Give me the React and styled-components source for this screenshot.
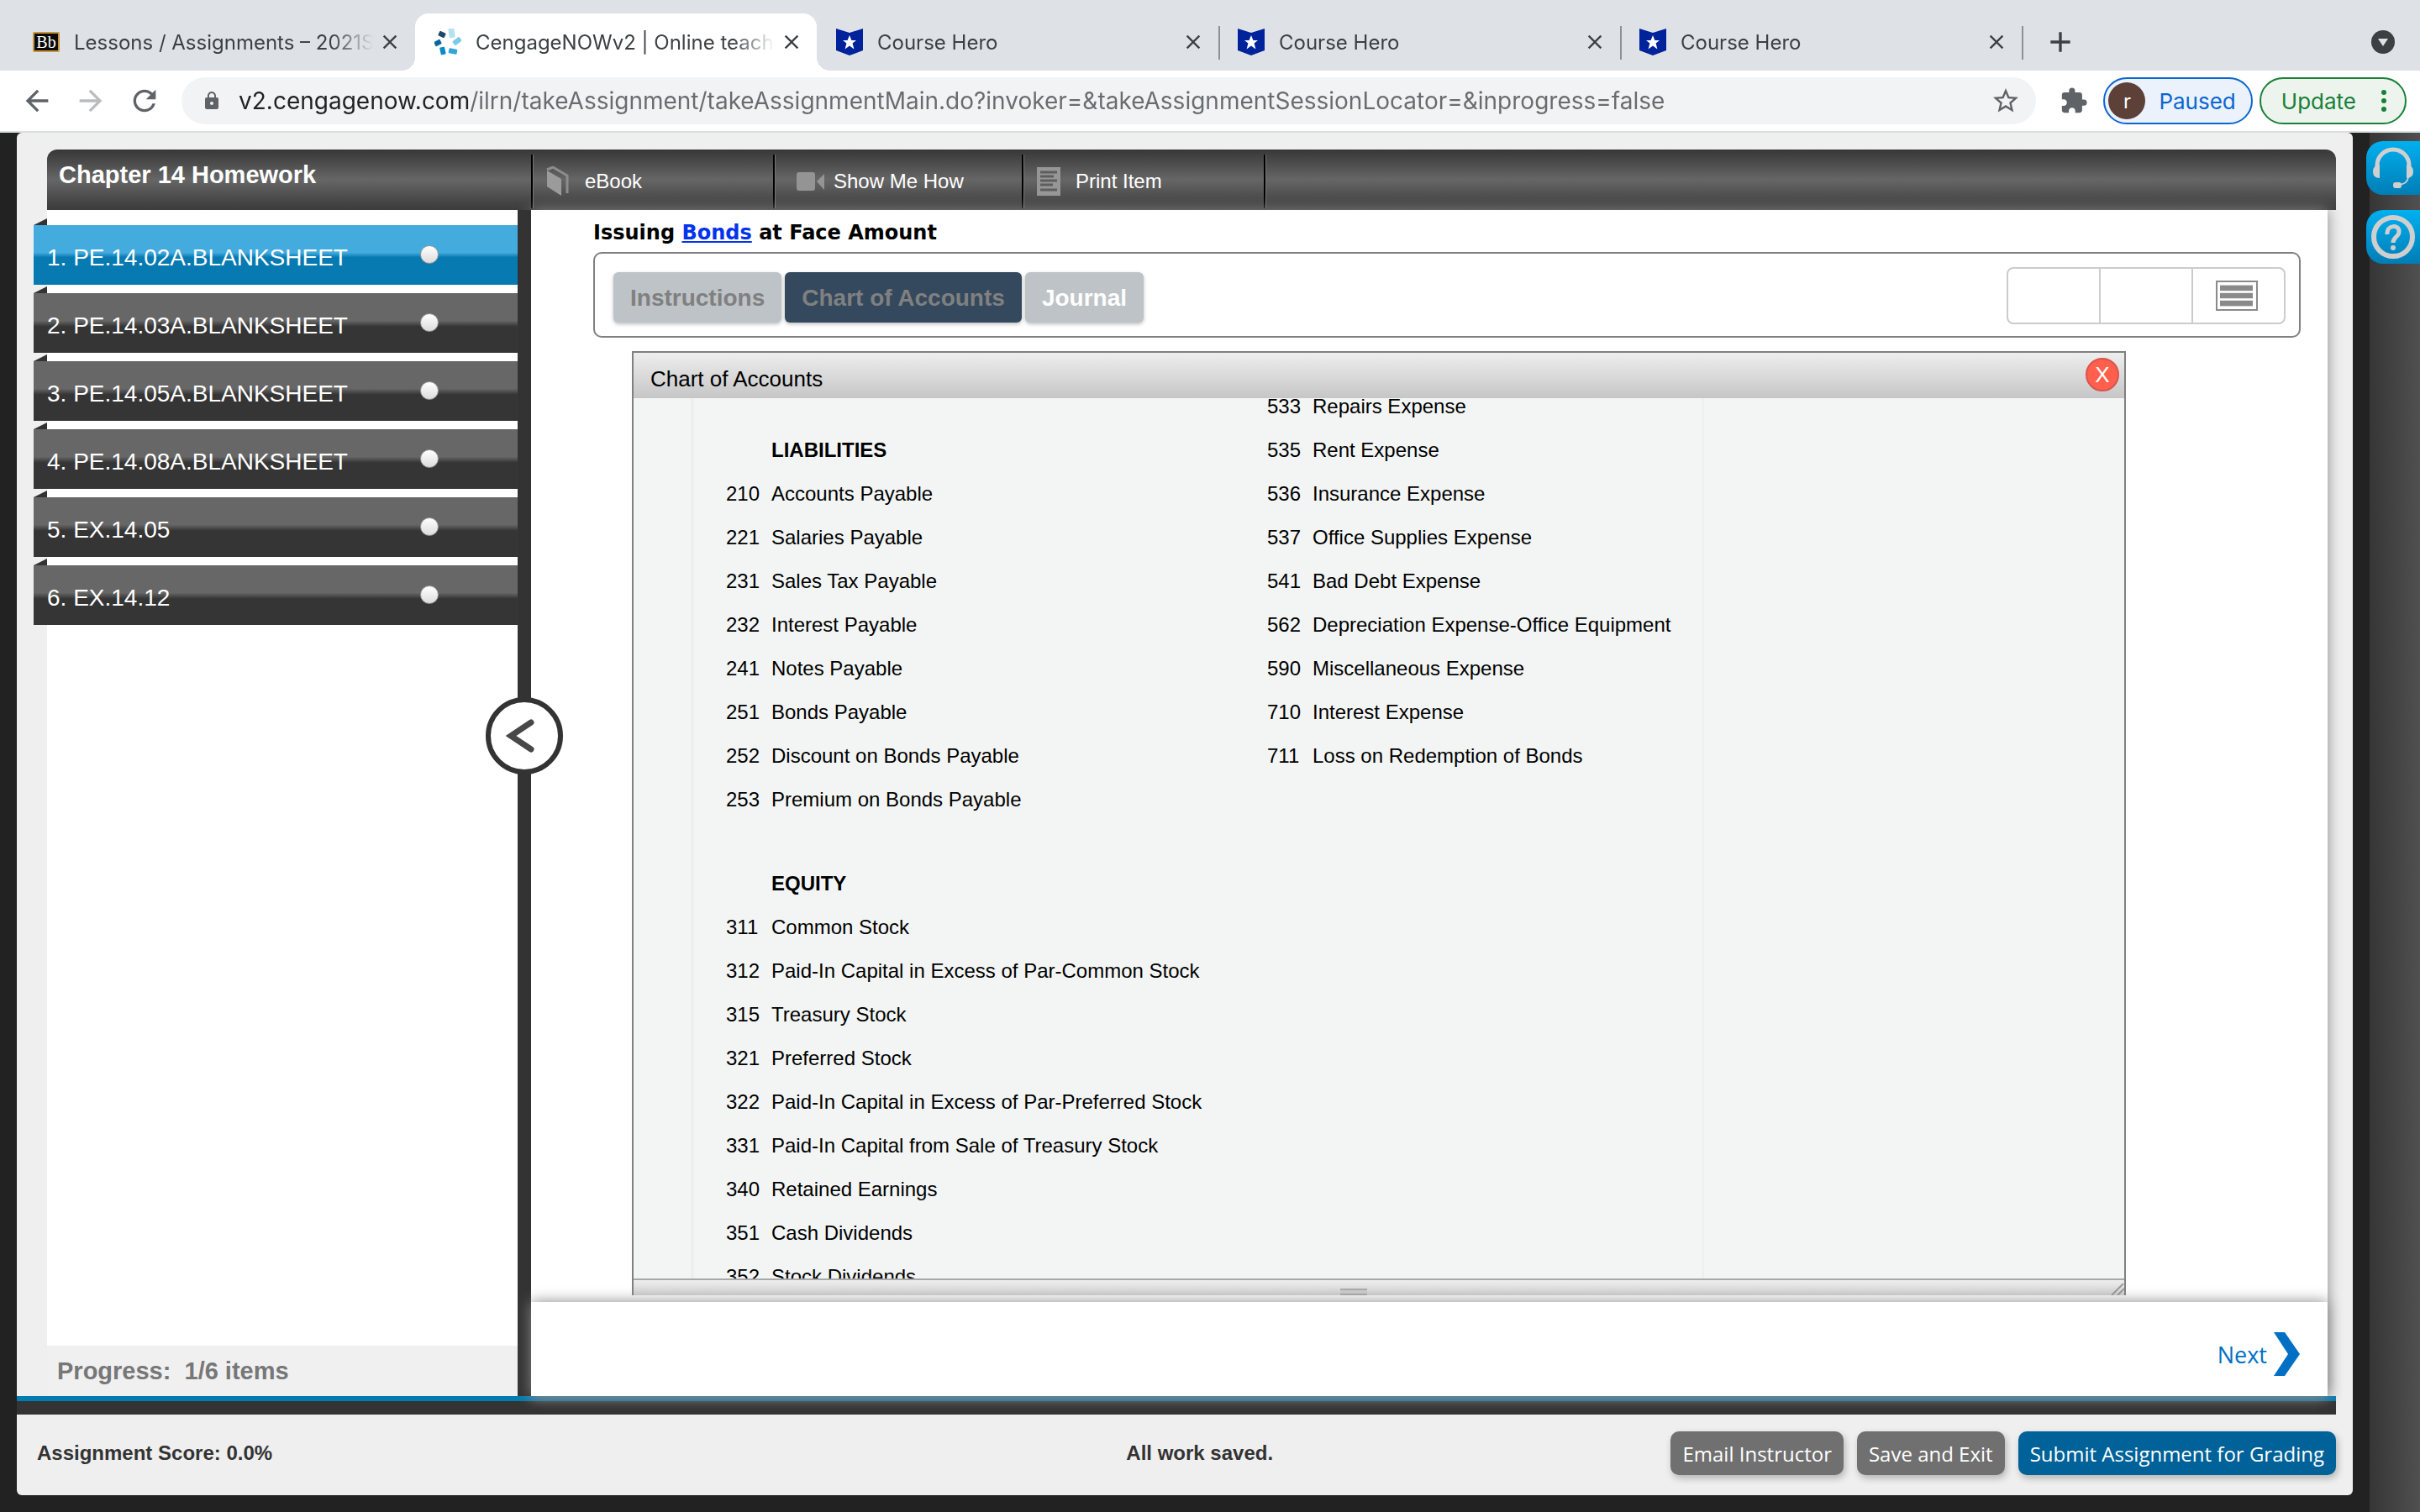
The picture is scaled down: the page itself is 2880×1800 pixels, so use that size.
import React, { useState } from "react";
import styled, { createGlobalStyle, css } from "styled-components";
import {
  MdAdd,
  MdArrowBack,
  MdArrowForward,
  MdClose,
  MdExtension,
  MdLock,
  MdRefresh,
  MdStarBorder,
} from "react-icons/md";

const BROWSER_TABS = [
  { title: "Lessons / Assignments – 2021S", icon: "blackboard" },
  { title: "CengageNOWv2 | Online teach", icon: "cengage", active: true },
  { title: "Course Hero", icon: "hero", divider: true },
  { title: "Course Hero", icon: "hero", divider: true },
  { title: "Course Hero", icon: "hero", divider: true },
];

const URL =
  "v2.cengagenow.com/ilrn/takeAssignment/takeAssignmentMain.do?invoker=&takeAssignmentSessionLocator=&inprogress=false";

const ITEMS = [
  "1. PE.14.02A.BLANKSHEET",
  "2. PE.14.03A.BLANKSHEET",
  "3. PE.14.05A.BLANKSHEET",
  "4. PE.14.08A.BLANKSHEET",
  "5. EX.14.05",
  "6. EX.14.12",
];

const LEFT_ACCOUNTS = [
  { type: "blank" },
  { type: "heading", name: "LIABILITIES" },
  { no: "210", name: "Accounts Payable" },
  { no: "221", name: "Salaries Payable" },
  { no: "231", name: "Sales Tax Payable" },
  { no: "232", name: "Interest Payable" },
  { no: "241", name: "Notes Payable" },
  { no: "251", name: "Bonds Payable" },
  { no: "252", name: "Discount on Bonds Payable" },
  { no: "253", name: "Premium on Bonds Payable" },
  { type: "gap" },
  { type: "heading", name: "EQUITY" },
  { no: "311", name: "Common Stock" },
  { no: "312", name: "Paid-In Capital in Excess of Par-Common Stock" },
  { no: "315", name: "Treasury Stock" },
  { no: "321", name: "Preferred Stock" },
  { no: "322", name: "Paid-In Capital in Excess of Par-Preferred Stock" },
  { no: "331", name: "Paid-In Capital from Sale of Treasury Stock" },
  { no: "340", name: "Retained Earnings" },
  { no: "351", name: "Cash Dividends" },
  { no: "352", name: "Stock Dividends" },
];

const RIGHT_ACCOUNTS = [
  { no: "533", name: "Repairs Expense" },
  { no: "535", name: "Rent Expense" },
  { no: "536", name: "Insurance Expense" },
  { no: "537", name: "Office Supplies Expense" },
  { no: "541", name: "Bad Debt Expense" },
  { no: "562", name: "Depreciation Expense-Office Equipment" },
  { no: "590", name: "Miscellaneous Expense" },
  { no: "710", name: "Interest Expense" },
  { no: "711", name: "Loss on Redemption of Bonds" },
];

const BlackboardIcon = () => (
  <BbLogo aria-hidden="true">Bb</BbLogo>
);

const CengageIcon = () => (
  <svg width="32" height="32" viewBox="0 0 32 32" aria-hidden="true">
    <rect x="17" y="0" width="7" height="11" rx="1" fill="#b5e1f0" transform="rotate(-8 20 5)" />
    <rect x="22" y="12" width="10" height="6" rx="1" fill="#7ac9e6" transform="rotate(-38 27 15)" />
    <rect x="17" y="24" width="10" height="6" rx="1" fill="#33a6d6" transform="rotate(10 22 27)" />
    <rect x="7" y="22" width="6" height="9" rx="1" fill="#0a8ac8" transform="rotate(-12 10 27)" />
    <rect x="0" y="14" width="8" height="6" rx="1" fill="#04689f" transform="rotate(-28 4 17)" />
    <rect x="5" y="4" width="8" height="6" rx="1" fill="#1c4869" transform="rotate(25 9 7)" />
  </svg>
);

const HeroIcon = () => (
  <svg width="32" height="32" viewBox="0 0 32 32" aria-hidden="true">
    <path d="M0 0L16 5L32 0V26L16 32L0 26Z" fill="#00229b" />
    <path
      d="M16 8L18.4 14H24L19.6 17.6L21.4 24.4L16 20.6L10.6 24.4L12.4 17.6L8 14H13.6Z"
      fill="#fff"
    />
  </svg>
);

const BookIcon = () => (
  <svg width="28" height="36" viewBox="0 0 28 36" aria-hidden="true">
    <path d="M1 5L18 15V35L1 24Z" fill="#9b9b9b" />
    <path d="M1 4L8 1L25 11V32" fill="none" stroke="#8d8d8d" strokeWidth="3" />
  </svg>
);

const VideoIcon = () => (
  <svg width="34" height="24" viewBox="0 0 34 24" aria-hidden="true">
    <rect x="0" y="1" width="22" height="22" rx="3" fill="#949494" />
    <path d="M24 12L33 3V22Z" fill="#949494" />
  </svg>
);

const PrintIcon = () => (
  <svg width="28" height="34" viewBox="0 0 28 34" aria-hidden="true">
    <rect width="28" height="34" fill="#969696" />
    <path
      d="M4 6H24M4 11H20M4 16H24M4 21H19M4 27H24"
      stroke="#5e5e5e"
      strokeWidth="3"
    />
  </svg>
);

const LinesIcon = () => (
  <svg width="50" height="36" viewBox="0 0 50 36" aria-hidden="true">
    <rect x="1" y="1" width="48" height="34" fill="#fff" stroke="#8a8a8a" strokeWidth="2" />
    <path d="M5 5H44V31H5Z" fill="#d2d2d2" />
    <path d="M5 9H44M5 18H44M5 27H44" stroke="#8a8a8a" strokeWidth="6" />
    <path d="M5 13.500H44M5 22.500H44" stroke="#fff" strokeWidth="2" />
  </svg>
);

const HeadsetIcon = () => (
  <svg width="50" height="50" viewBox="0 0 50 50" aria-hidden="true">
    <path d="M6 27V22a19 19 0 0 1 38 0V27" fill="none" stroke="#d0d0d0" strokeWidth="5" />
    <path
      d="M9 21V37Q1 37 1 29Q1 22 9 21ZM41 21V37Q49 37 49 29Q49 22 41 21Z"
      fill="#d0d0d0"
    />
    <path d="M43 36Q42 44 32 45" fill="none" stroke="#c4cdd2" strokeWidth="2" />
    <rect x="25" y="42" width="10" height="7" rx="3" fill="#d0d0d0" />
  </svg>
);

const HelpIcon = () => (
  <svg width="52" height="52" viewBox="0 0 52 52" aria-hidden="true">
    <circle cx="26" cy="26" r="23" fill="none" stroke="#cfcfcf" strokeWidth="6" />
    <path
      d="M19 23C18 11 34 11 33 20C33 26 26 26 26 33"
      fill="none"
      stroke="#cfcfcf"
      strokeWidth="5"
    />
    <circle cx="26" cy="39" r="3" fill="#cfcfcf" />
  </svg>
);

const TAB_ICONS = {
  blackboard: BlackboardIcon,
  cengage: CengageIcon,
  hero: HeroIcon,
};

const BrowserChrome = () => (
  <header>
    <TabStrip>
      {BROWSER_TABS.map((tab, index) => {
        const Icon = TAB_ICONS[tab.icon];
        return (
          <BrowserTab key={index} $active={tab.active} $divider={tab.divider}>
            <Icon />
            <TabTitle>{tab.title}</TabTitle>
            <TabClose aria-label="Close tab">
              <MdClose size={28} />
            </TabClose>
          </BrowserTab>
        );
      })}
      <NewTab aria-label="New tab">
        <MdAdd size={40} />
      </NewTab>
      <TabSearch aria-label="Search tabs">
        <svg width="28" height="28" viewBox="0 0 28 28">
          <circle cx="14" cy="14" r="14" fill="#3c4043" />
          <path d="M8 10H20L14 19Z" fill="#dee1e6" />
        </svg>
      </TabSearch>
    </TabStrip>
    <AddressRow>
      <NavButton aria-label="Back">
        <MdArrowBack size={40} />
      </NavButton>
      <NavButton aria-label="Forward" disabled>
        <MdArrowForward size={40} />
      </NavButton>
      <NavButton aria-label="Reload">
        <MdRefresh size={40} />
      </NavButton>
      <Omnibox>
        <MdLock size={24} />
        <UrlInput aria-label="Address" defaultValue={URL} />
        <MdStarBorder size={36} />
      </Omnibox>
      <ExtensionButton aria-label="Extensions">
        <MdExtension size={34} />
      </ExtensionButton>
      <PausedButton>
        <Avatar>r</Avatar>
        Paused
      </PausedButton>
      <UpdateButton>
        Update
        <svg width="10" height="48" viewBox="0 0 10 48" aria-hidden="true">
          <circle cx="5" cy="14" r="3" fill="#188038" />
          <circle cx="5" cy="24" r="3" fill="#188038" />
          <circle cx="5" cy="34" r="3" fill="#188038" />
        </svg>
      </UpdateButton>
    </AddressRow>
  </header>
);

const AccountTable = ({ rows }) => (
  <Accounts>
    <tbody>
      {rows.map((row, index) => (
        <AccountRow key={index} $gap={row.type === "gap"}>
          <AccountNo>{row.no}</AccountNo>
          <AccountName as={row.type === "heading" ? "th" : "td"}>
            {row.name}
          </AccountName>
        </AccountRow>
      ))}
    </tbody>
  </Accounts>
);

const App = () => {
  const [current, setCurrent] = useState(0);

  return (
    <Screen>
      <GlobalStyle />
      <BrowserChrome />
      <Page>
        <Panel>
          <TitleBar>
            <Chapter>Chapter 14 Homework</Chapter>
            <MenuButton>
              <BookIcon /> eBook
            </MenuButton>
            <MenuButton $wide>
              <VideoIcon /> Show Me How
            </MenuButton>
            <MenuButton>
              <PrintIcon /> Print Item
            </MenuButton>
            <MenuEnd />
          </TitleBar>

          <Columns>
            <Sidebar>
              <ItemList>
                {ITEMS.map((item, index) => (
                  <li key={item}>
                    <ItemButton
                      $active={index === current}
                      onClick={() => setCurrent(index)}
                    >
                      {item}
                      <Dot />
                    </ItemButton>
                  </li>
                ))}
              </ItemList>
              <Progress>Progress:&nbsp; 1/6 items</Progress>
            </Sidebar>

            <Splitter>
              <CollapseButton aria-label="Collapse item list">
                <svg width="36" height="44" viewBox="0 0 36 44" aria-hidden="true">
                  <path
                    d="M30 6L6 22L30 38"
                    fill="none"
                    stroke="#484848"
                    strokeWidth="7"
                    strokeLinecap="round"
                  />
                </svg>
              </CollapseButton>
            </Splitter>

            <Main>
              <Content>
                <ItemTitle>
                  Issuing <a href="#bonds">Bonds</a> at Face Amount
                </ItemTitle>
                <TabBar>
                  <PanelTab>Instructions</PanelTab>
                  <PanelTab $selected>Chart of Accounts</PanelTab>
                  <PanelTab $fresh>Journal</PanelTab>
                  <ButtonGroup>
                    <GroupButton aria-label="Split left" />
                    <GroupButton aria-label="Split right" />
                    <GroupButton aria-label="Single column">
                      <LinesIcon />
                    </GroupButton>
                  </ButtonGroup>
                </TabBar>
                <Window>
                  <WindowTitle>
                    Chart of Accounts
                    <WindowClose>X</WindowClose>
                  </WindowTitle>
                  <WindowBody>
                    <Ledger>
                      <AccountTable rows={LEFT_ACCOUNTS} />
                      <AccountTable rows={RIGHT_ACCOUNTS} />
                    </Ledger>
                  </WindowBody>
                  <WindowFoot>
                    <Grip />
                    <svg width="60" height="14" viewBox="0 0 60 14" aria-hidden="true">
                      <path d="M45 14L59 0M52 14L60 6" stroke="#999" strokeWidth="2" />
                    </svg>
                  </WindowFoot>
                </Window>
              </Content>
              <NextBar>
                <NextLink href="#next">
                  Next
                  <svg width="32" height="52" viewBox="0 0 32 52" aria-hidden="true">
                    <path d="M0 0H13L31 26L13 52H0L17 26Z" fill="#0070c4" />
                  </svg>
                </NextLink>
              </NextBar>
            </Main>
          </Columns>
          <BlueRule />

          <Footer>
            <span>Assignment Score: 0.0%</span>
            <span>All work saved.</span>
            <Actions>
              <ActionButton>Email Instructor</ActionButton>
              <ActionButton>Save and Exit</ActionButton>
              <ActionButton $primary>Submit Assignment for Grading</ActionButton>
            </Actions>
          </Footer>
        </Panel>
        <Rail>
          <RailButton aria-label="Support">
            <HeadsetIcon />
          </RailButton>
          <RailButton aria-label="Help">
            <HelpIcon />
          </RailButton>
        </Rail>
      </Page>
    </Screen>
  );
};

const GlobalStyle = createGlobalStyle`
  * {
    box-sizing: border-box;
  }

  body {
    margin: 0;
    font-family: "Liberation Sans", Arial, sans-serif;
    font-size: 24px;
  }

  button {
    margin: 0;
    padding: 0;
    border: none;
    background: none;
    font: inherit;
    color: inherit;
    cursor: pointer;
  }

  svg {
    flex: none;
    display: block;
  }
`;

const Screen = styled.div`
  display: flex;
  flex-direction: column;
  height: 100vh;
  overflow: hidden;
`;

/* browser chrome */

const TabStrip = styled.div`
  display: flex;
  align-items: center;
  height: 84px;
  padding: 16px 30px 0 16px;
  background: #dee1e6;
  color: #3c4043;
  font-family: Inter, sans-serif;
`;

const activeTab = css`
  background: #fff;

  /* flared bottom corners */
  &::before,
  &::after {
    content: "";
    position: absolute;
    bottom: 0;
    width: 16px;
    height: 16px;
  }

  &::before {
    right: 100%;
    background: radial-gradient(circle at 0 0, transparent 16px, #fff 16px);
  }

  &::after {
    left: 100%;
    background: radial-gradient(circle at 100% 0, transparent 16px, #fff 16px);
  }
`;

const tabDivider = css`
  &::after {
    content: "";
    position: absolute;
    right: -2px;
    top: 15px;
    width: 2px;
    height: 40px;
    background: #8d9196;
  }
`;

const BrowserTab = styled.div`
  position: relative;
  flex: 0 1 478px;
  min-width: 0;
  height: 68px;
  display: flex;
  align-items: center;
  padding: 0 16px 0 23px;
  border-radius: 16px 16px 0 0;
  ${(props) => props.$active && activeTab}
  ${(props) => props.$divider && tabDivider}
`;

const BbLogo = styled.span`
  flex: none;
  display: flex;
  align-items: center;
  justify-content: center;
  width: 32px;
  height: 24px;
  border: 2px solid #c8963c;
  border-radius: 2px;
  background: #0a0a0a;
  color: #fff;
  font: 20px "Liberation Serif", serif;
`;

const TabTitle = styled.span`
  flex: 1;
  min-width: 0;
  margin-left: 17px;
  margin-right: 6px;
  overflow: hidden;
  white-space: nowrap;
  mask-image: linear-gradient(to right, #000 86%, transparent);
`;

const TabClose = styled.button`
  width: 28px;
`;

const NewTab = styled.button`
  margin-left: 26px;
`;

const TabSearch = styled.button`
  margin-left: auto;
`;

const AddressRow = styled.div`
  display: flex;
  align-items: center;
  height: 74px;
  padding: 0 16px 0 24px;
  border-bottom: 2px solid #dadfe4;
  background: #fff;
  font-family: Inter, sans-serif;
  font-size: 28px;
`;

const NavButton = styled.button`
  margin-right: 24px;
  color: ${(props) => (props.disabled ? "#babcbe" : "#5f6368")};
`;

const Omnibox = styled.div`
  flex: 1;
  display: flex;
  align-items: center;
  height: 56px;
  padding: 0 18px 0 24px;
  border-radius: 28px;
  background: #f1f3f4;
  color: #5f6368;
`;

const UrlInput = styled.input`
  flex: 1;
  min-width: 0;
  margin: 0 20px;
  padding: 0;
  border: none;
  outline: none;
  font: inherit;
  color: transparent;
  background: linear-gradient(to right, #202124 275px, #686b6f 275px);
  background-clip: text;
`;

const ExtensionButton = styled.button`
  margin: 0 18px 0 28px;
  color: #5f6368;
`;

const Pill = styled.button`
  display: flex;
  align-items: center;
  height: 56px;
  border: 2px solid;
  border-radius: 28px;
  font-size: 26px;
`;

const PausedButton = styled(Pill)`
  gap: 16px;
  margin-right: 8px;
  padding: 0 18px 0 4px;
  border-color: #0b66d0;
  background: #ebf2fb;
  color: #0b66d0;
`;

const UpdateButton = styled(Pill)`
  gap: 28px;
  padding: 0 20px 0 24px;
  border-color: #188038;
  background: #edf4ee;
  color: #188038;
`;

const Avatar = styled.span`
  display: flex;
  align-items: center;
  justify-content: center;
  width: 44px;
  height: 44px;
  border-radius: 50%;
  background: #5d4037;
  color: #fff;
  font-size: 24px;
`;

/* assignment page */

const Page = styled.div`
  flex: 1;
  min-height: 0;
  display: flex;
  padding-left: 20px;
  background: #222;
`;

const Panel = styled.div`
  flex: 1;
  min-width: 0;
  display: flex;
  flex-direction: column;
  margin: 0 20px 20px 0;
  border-radius: 6px;
  background: #efefef;
`;

const TitleBar = styled.div`
  display: flex;
  height: 72px;
  margin: 20px 20px 0 36px;
  padding: 6px 0 2px;
  border-radius: 12px 12px 0 0;
  background: linear-gradient(#373737, #666 50%, #444 88%, #3c3c3c);
  color: #fff;
`;

const Chapter = styled.h1`
  width: 576px;
  margin: 0;
  padding: 8px 0 0 14px;
  font-size: 29px;
  line-height: 32px;
`;

const MenuButton = styled.button`
  display: flex;
  align-items: center;
  gap: ${(props) => (props.$wide ? 10 : 18)}px;
  width: ${(props) => (props.$wide ? 296 : 288)}px;
  padding-left: ${(props) => (props.$wide ? 26 : 16)}px;
  border-left: 2px solid #000;
  box-shadow: inset 1px 0 0 #777;
`;

const MenuEnd = styled.span`
  border-left: 2px solid #000;
  border-right: 1px solid #777;
`;

const Columns = styled.div`
  flex: 1;
  min-height: 0;
  display: flex;
  margin: 0 30px 0 36px;
`;

const Sidebar = styled.nav`
  flex: none;
  width: 560px;
  display: flex;
  flex-direction: column;
  background: #fff;
`;

const ItemList = styled.ul`
  flex: 1;
  display: flex;
  flex-direction: column;
  gap: 10px;
  margin: 18px 0 0 -16px;
  padding: 0;
  list-style: none;
`;

const ItemButton = styled.button`
  position: relative;
  display: flex;
  align-items: center;
  justify-content: space-between;
  width: 100%;
  height: 71px;
  padding: 6px 94px 0 16px;
  background: ${(props) =>
    props.$active
      ? "linear-gradient(#44abdf 46%, #077ab1 54%)"
      : "linear-gradient(#676767 46%, #353535 56%)"};
  color: #fff;
  font-size: 28px;

  /* folded corner behind the left edge */
  &::before {
    content: "";
    position: absolute;
    left: 0;
    bottom: 100%;
    border-left: 16px solid transparent;
    border-bottom: 8px solid #333;
  }
`;

const Dot = styled.span`
  width: 22px;
  height: 22px;
  margin-bottom: 8px;
  border: 1px solid #999;
  border-radius: 50%;
  background: linear-gradient(#fff, #dcdcdc);
`;

const Progress = styled.div`
  height: 60px;
  padding-left: 12px;
  background: #f0f0f0;
  color: #777;
  font-size: 29px;
  font-weight: bold;
  line-height: 60px;
`;

const Splitter = styled.div`
  position: relative;
  z-index: 1;
  flex: none;
  width: 16px;
  background: #333;
`;

const CollapseButton = styled.button`
  position: absolute;
  top: 580px;
  left: 50%;
  display: flex;
  align-items: center;
  justify-content: center;
  width: 92px;
  height: 92px;
  margin-left: -46px;
  padding-right: 8px;
  border: 6px solid #333;
  border-radius: 50%;
  background: #fff;
`;

const Main = styled.main`
  position: relative;
  flex: 1;
  min-width: 0;
  display: flex;
  flex-direction: column;
  background: #fff;
  box-shadow: 0 0 16px #888;
`;

const Content = styled.div`
  flex: 1;
  min-height: 0;
  display: flex;
  flex-direction: column;
  margin-bottom: 8px;
  padding: 12px 32px 0 74px;
`;

const ItemTitle = styled.h2`
  margin: 0 0 8px;
  font-family: "DejaVu Sans", Verdana, sans-serif;
  font-size: 24px;
  line-height: 30px;

  a {
    color: #0433ee;
  }
`;

const TabBar = styled.div`
  flex: none;
  display: flex;
  align-items: center;
  gap: 4px;
  height: 102px;
  padding: 2px 16px 0 22px;
  border: 2px solid #808080;
  border-radius: 10px;
`;

const PanelTab = styled.button`
  height: 60px;
  margin-top: 4px;
  padding: 2px 20px 0;
  border-radius: 6px;
  background: ${(props) => (props.$selected ? "#34495e" : "#bdc3c7")};
  box-shadow: 0 2px 4px rgba(0, 0, 0, 0.25);
  color: ${(props) => (props.$fresh ? "#fff" : "#808080")};
  font-size: 28px;
  font-weight: bold;
`;

const ButtonGroup = styled.div`
  display: flex;
  margin-left: auto;
  border: 2px solid #ccc;
  border-radius: 8px;
`;

const GroupButton = styled.button`
  display: flex;
  align-items: center;
  justify-content: center;
  width: 110px;
  height: 64px;
  border-right: 2px solid #ccc;

  &:last-child {
    width: 108px;
    padding-right: 4px;
    border-right: none;
  }
`;

const Window = styled.section`
  flex: 1;
  min-height: 0;
  display: flex;
  flex-direction: column;
  margin: 16px 208px 0 46px;
  border: 2px solid #808080;
  border-bottom: none;
`;

const WindowTitle = styled.div`
  flex: none;
  display: flex;
  align-items: center;
  justify-content: space-between;
  height: 54px;
  padding: 8px 6px 0 20px;
  background: linear-gradient(#eee, #c6c6c6);
  font-size: 26px;
`;

const WindowClose = styled.button`
  width: 40px;
  height: 40px;
  margin-bottom: 10px;
  border: 2px solid #d9534f;
  border-radius: 50%;
  background: #ff5f4c;
  color: #fff;
`;

const WindowBody = styled.div`
  flex: 1;
  min-height: 0;
  overflow: hidden;
  background: #f3f5f4;
`;

const Ledger = styled.div`
  display: flex;
  align-items: flex-start;
  width: 68%;
  margin-left: 68px;
  padding-left: 38px;
  border: solid #eee;
  border-width: 0 2px 0 4px;
`;

const Accounts = styled.table`
  flex: 0 0 644px;
  border-collapse: collapse;
`;

const AccountRow = styled.tr`
  height: ${(props) => (props.$gap ? 48 : 52)}px;
  vertical-align: top;
`;

const AccountNo = styled.td`
  width: 54px;
  padding: 0;
  line-height: 20px;
`;

const AccountName = styled.td`
  padding: 0;
  line-height: 20px;
  text-align: left;
  white-space: nowrap;
`;

const WindowFoot = styled.div`
  flex: none;
  display: flex;
  align-items: flex-end;
  justify-content: flex-end;
  height: 20px;
  border-top: 2px solid #a8a8a8;
  background: linear-gradient(#eee, #d0d0d0);
`;

const Grip = styled.span`
  width: 32px;
  height: 8px;
  margin: 0 auto;
  border: solid #aaa;
  border-width: 2px 0;
  background: #ccc;
`;

const NextBar = styled.div`
  position: relative;
  z-index: 2;
  display: flex;
  align-items: center;
  justify-content: flex-end;
  height: 112px;
  padding: 12px 32px 0 0;
  background: #fff;
  box-shadow: 0 0 16px #888;
`;

const NextLink = styled.a`
  display: flex;
  align-items: center;
  gap: 8px;
  color: #0070c4;
  font-family: "Open Sans", sans-serif;
  font-size: 27px;
  text-decoration: none;
`;

const BlueRule = styled.div`
  height: 22px;
  margin-right: 20px;
  border-top: 6px solid #007cb2;
  background: #333;
`;

const Footer = styled.footer`
  display: grid;
  grid-template-columns: 2fr 1fr auto;
  align-items: center;
  height: 96px;
  padding: 0 20px 4px 24px;
  color: #333;
  font-weight: bold;
`;

const Actions = styled.div`
  display: flex;
  gap: 16px;
`;

const ActionButton = styled.button`
  height: 52px;
  padding: 0 14px;
  border-radius: 10px;
  background: ${(props) => (props.$primary ? "#006298" : "#707070")};
  box-shadow: 2px 4px 8px rgba(0, 0, 0, 0.25);
  color: #fff;
  font-family: "Open Sans", sans-serif;
  font-weight: normal;
  white-space: nowrap;
`;

const Rail = styled.aside`
  flex: none;
  width: 60px;
  display: flex;
  flex-direction: column;
  align-items: flex-end;
  gap: 18px;
  padding-top: 10px;
  background: linear-gradient(to right, #363636, #505050);
`;

const RailButton = styled.button`
  display: flex;
  align-items: center;
  justify-content: center;
  width: 64px;
  height: 64px;
  border-radius: 20px 0 0 20px;
  background: linear-gradient(#00b0f0, #007db5);
`;

export default App;
